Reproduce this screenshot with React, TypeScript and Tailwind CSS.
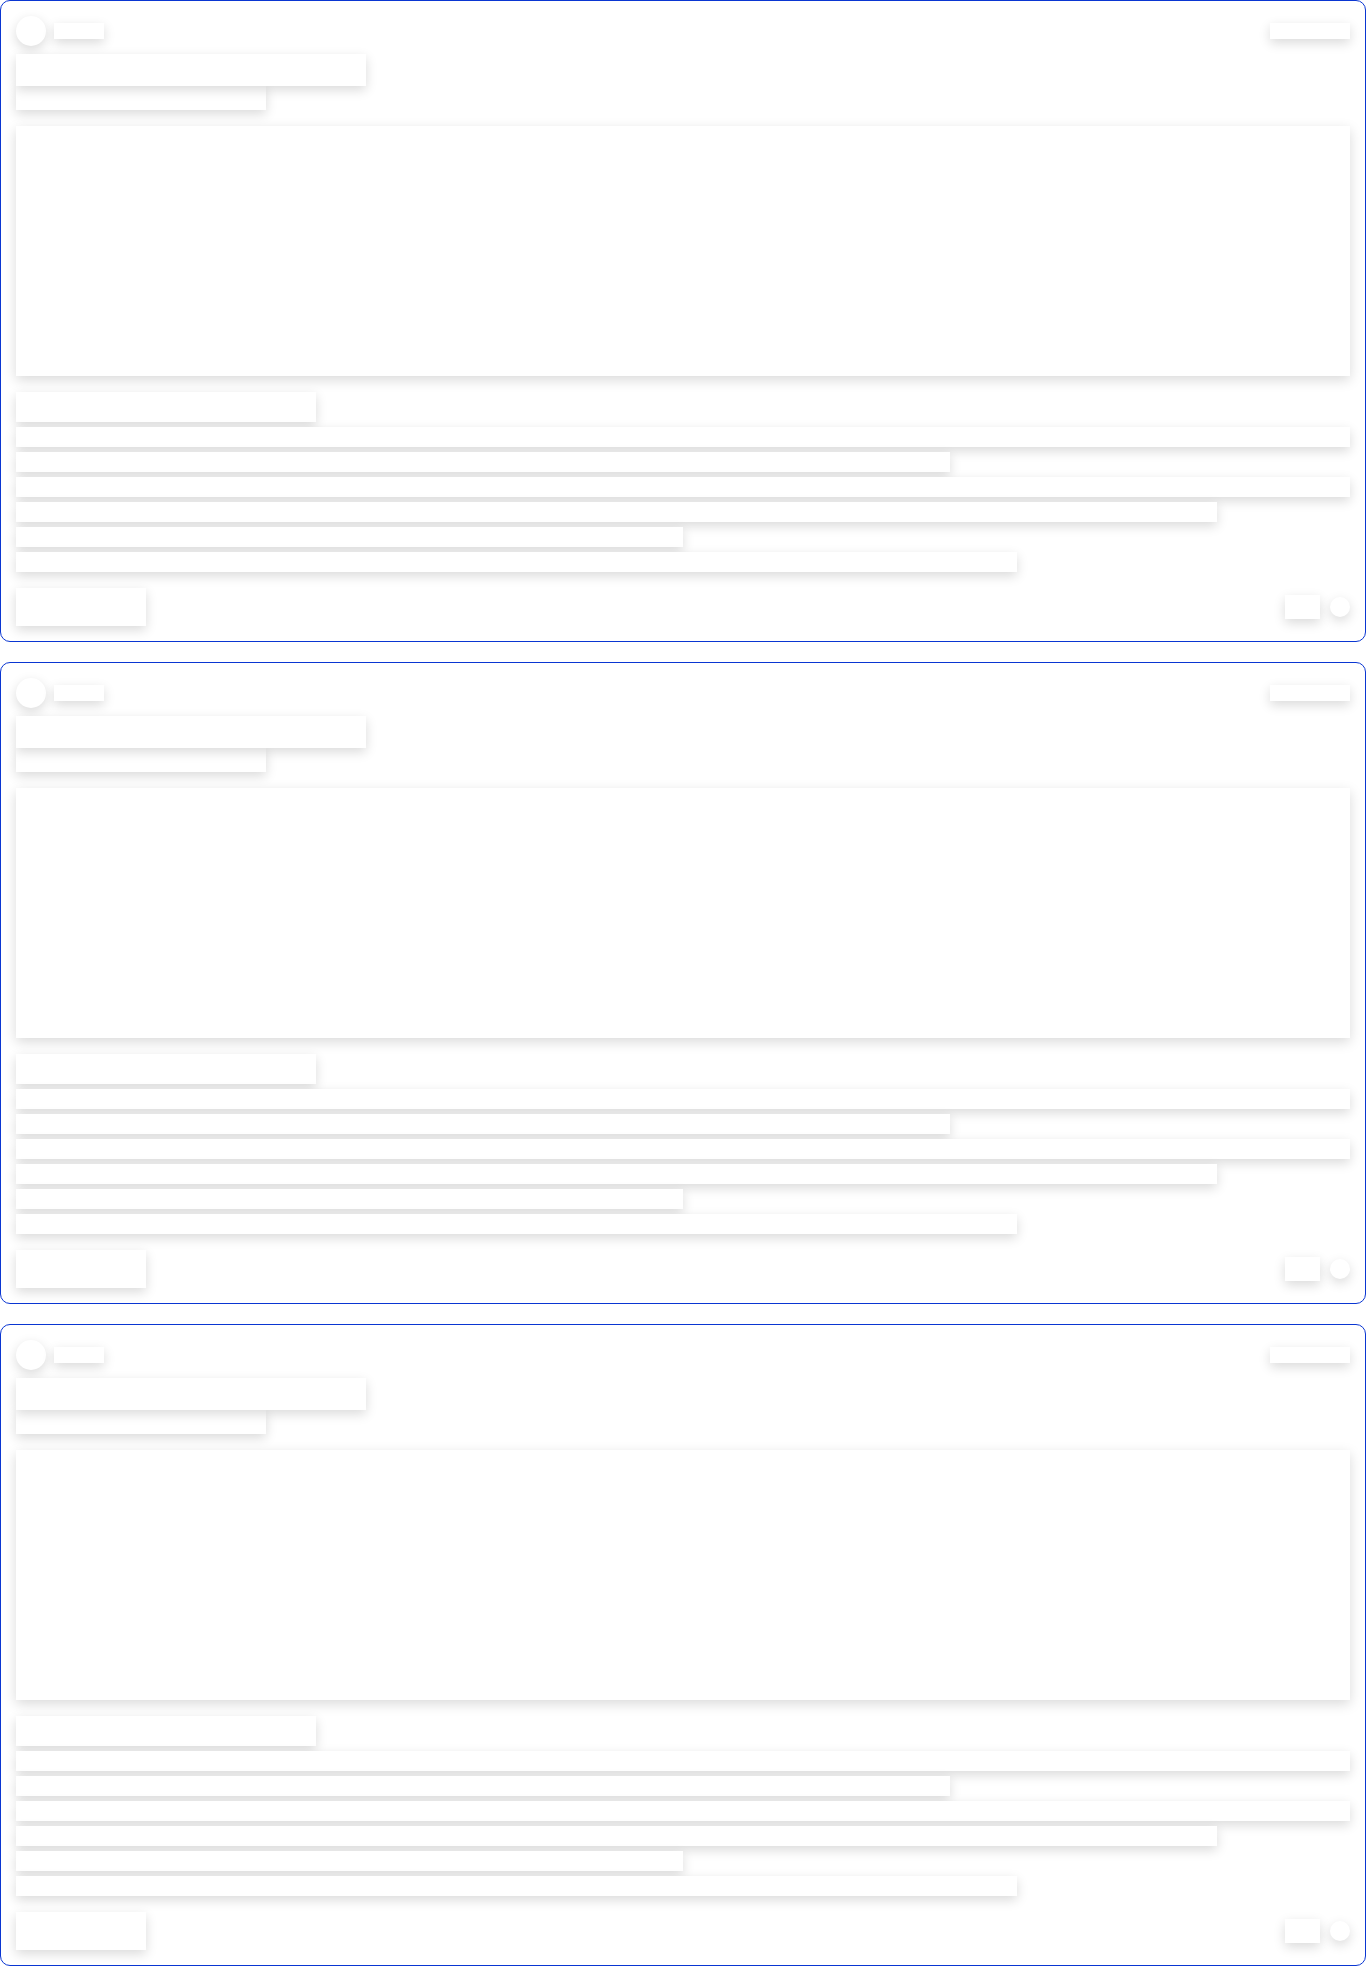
const shade = "bg-white shadow-[0_4px_12px_rgba(0,0,0,0.15)]";

function SkeletonCard() {
  return (
    <div className="rounded-[10px] border border-[#0a36d2] bg-white p-[15px]">
      <div className="flex h-[30px] items-center justify-between">
        <div className="flex items-center gap-2">
          <div className={`h-[30px] w-[30px] rounded-full ${shade}`}></div>
          <div className={`h-4 w-[50px] ${shade}`}></div>
        </div>
        <div className={`h-4 w-20 ${shade}`}></div>
      </div>
      {/* title sits above the subtitle so its shadow falls over it */}
      <div className={`relative mt-2 h-8 w-[350px] ${shade}`}></div>
      <div className={`h-6 w-[250px] ${shade}`}></div>
      <div className={`mt-4 h-[250px] w-full ${shade}`}></div>
      <div className={`mt-4 h-[30px] w-[300px] ${shade}`}></div>
      <div className="mt-[5px] flex flex-col gap-[5px]">
        <div className={`h-5 w-full ${shade}`}></div>
        <div className={`h-5 w-[70%] ${shade}`}></div>
        <div className={`h-5 w-full ${shade}`}></div>
        <div className={`h-5 w-[90%] ${shade}`}></div>
        <div className={`h-5 w-1/2 ${shade}`}></div>
        <div className={`h-5 w-3/4 ${shade}`}></div>
      </div>
      <div className="mt-4 flex items-center justify-between">
        <div className={`h-[38px] w-[130px] ${shade}`}></div>
        <div className="flex items-center gap-[10px]">
          <div className={`h-6 w-[35px] ${shade}`}></div>
          <div className={`h-5 w-5 rounded-full ${shade}`}></div>
        </div>
      </div>
    </div>
  );
}

export default function App() {
  return (
    <main className="flex min-h-screen flex-col gap-5 bg-white">
      <SkeletonCard />
      <SkeletonCard />
      <SkeletonCard />
    </main>
  );
}
